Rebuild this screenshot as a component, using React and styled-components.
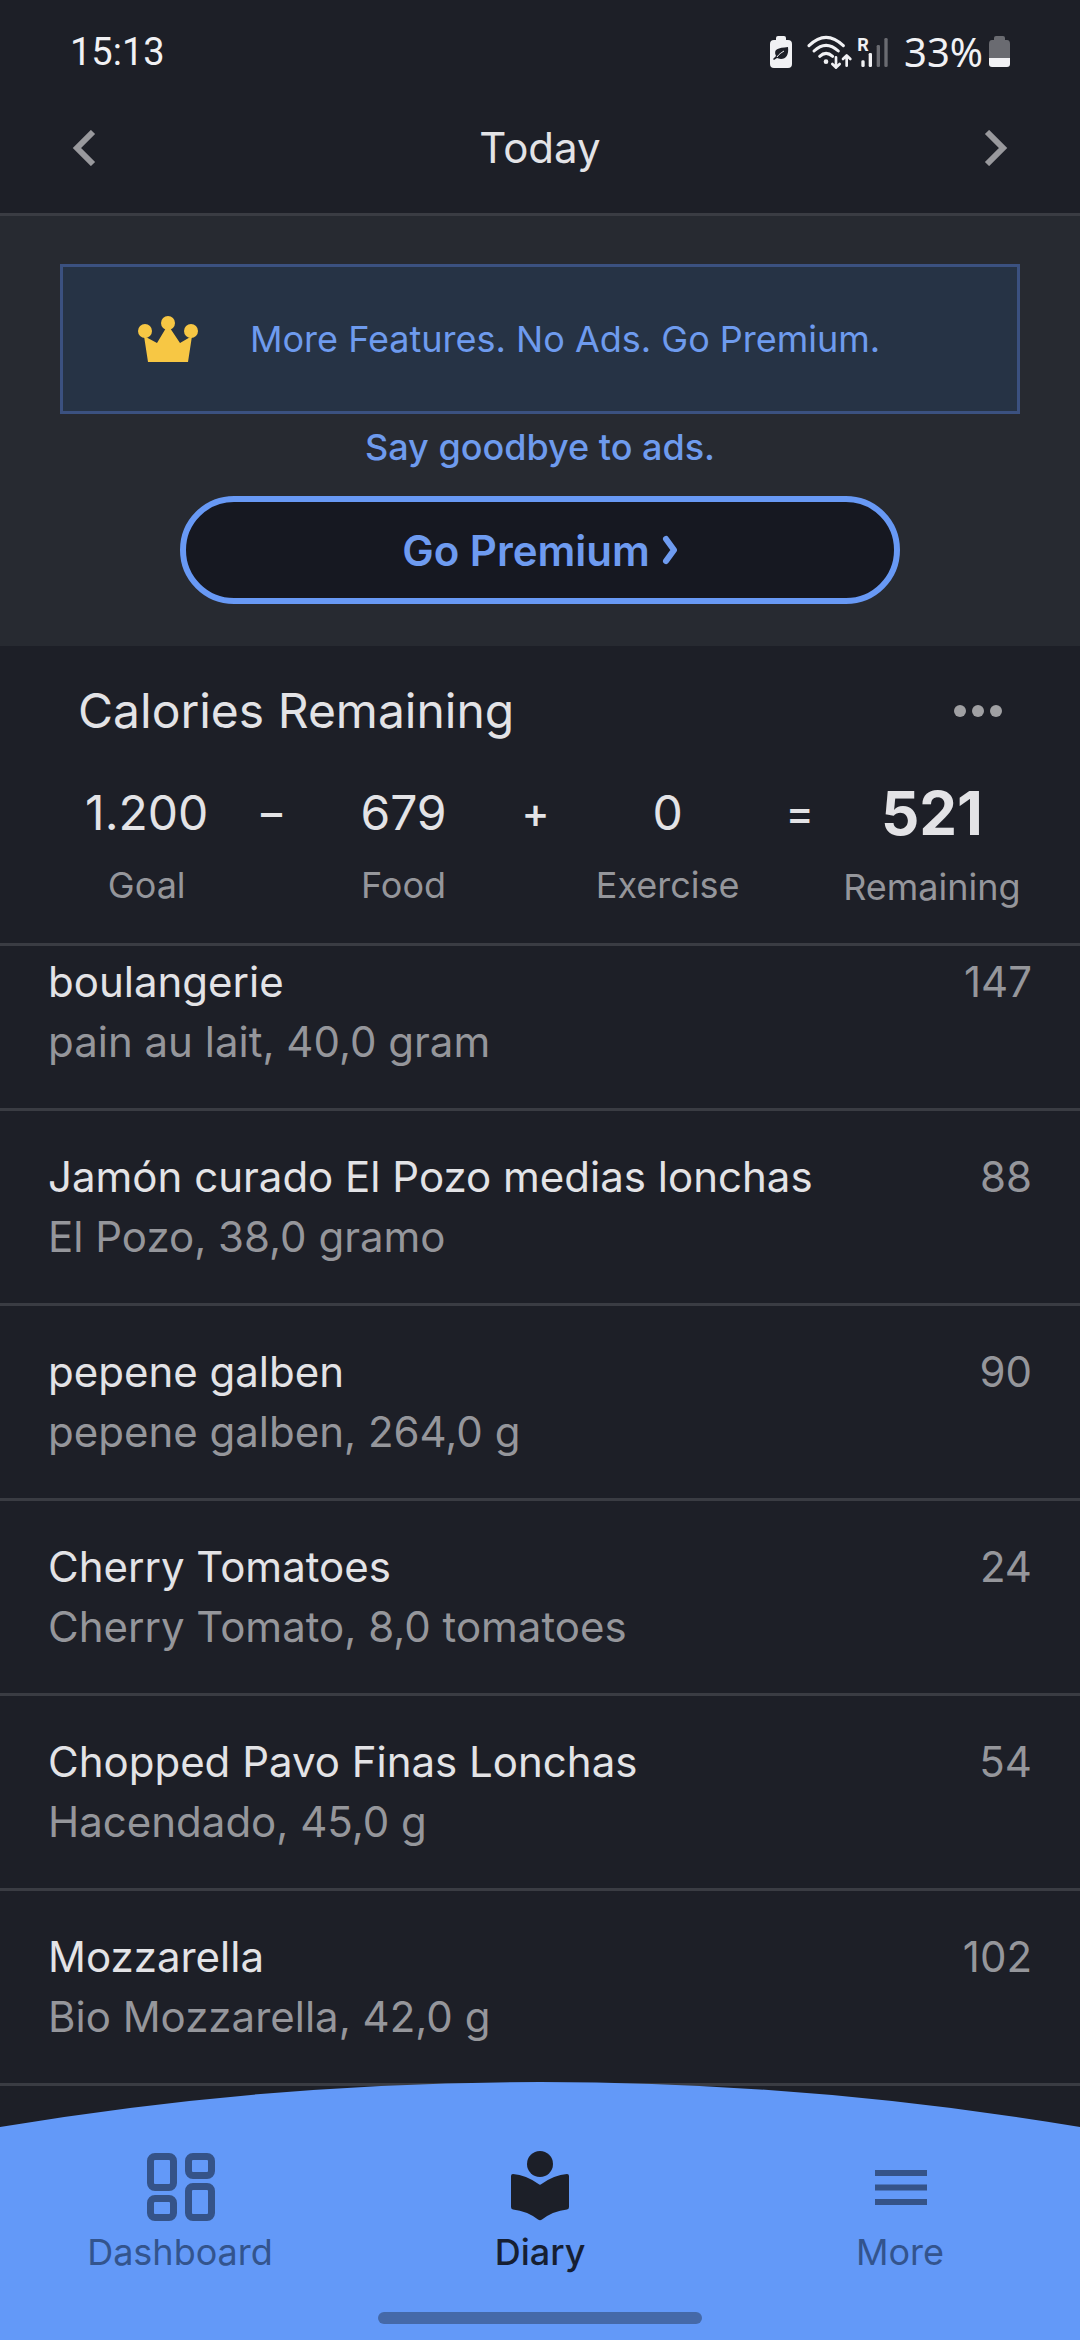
import { Fragment } from "react";
import styled, { createGlobalStyle } from "styled-components";

const foods = [
  { name: "boulangerie", detail: "pain au lait, 40,0 gram", calories: 147 },
  {
    name: "Jamón curado El Pozo medias lonchas",
    detail: "El Pozo, 38,0 gramo",
    calories: 88,
  },
  { name: "pepene galben", detail: "pepene galben, 264,0 g", calories: 90 },
  {
    name: "Cherry Tomatoes",
    detail: "Cherry Tomato, 8,0 tomatoes",
    calories: 24,
  },
  { name: "Chopped Pavo Finas Lonchas", detail: "Hacendado, 45,0 g", calories: 54 },
  { name: "Mozzarella", detail: "Bio Mozzarella, 42,0 g", calories: 102 },
];

const totals = [
  { value: "1.200", label: "Goal" },
  { operator: "–", value: "679", label: "Food" },
  { operator: "+", value: "0", label: "Exercise" },
  { operator: "=", value: "521", label: "Remaining", total: true },
];

const SaverIcon = () => (
  <svg width="22" height="32" viewBox="0 0 22 32" aria-hidden="true">
    <path
      d="M6 2Q6 0 8 0H14Q16 0 16 2V4H18Q22 4 22 8V28Q22 32 18 32H4Q0 32 0 28V8Q0 4 4 4H6Z"
      fill="#f1f1f4"
    />
    <path
      d="M18 11C19 19 16 23 11 23C9 23 8 22 7 22L4 24L3 23L6 20C3 13 8 12 18 11Z"
      fill="#1d1f27"
    />
    <path d="M7 21C9 18 11 17 14 15" stroke="#f1f1f4" fill="none" />
  </svg>
);

const NetworkIcon = () => (
  <svg width="82" height="35" viewBox="192 42 246 105" aria-hidden="true">
    <g fill="none" stroke="#f1f1f4" strokeWidth="9" strokeLinecap="round">
      <path d="M198 74Q249 24 301 74" />
      <path d="M213 90Q249 56 286 90" />
      <path d="M230 106Q249 88 269 106" />
      <g strokeWidth="8" strokeLinejoin="round">
        <path d="M279 109V140M268 129L279 140L290 129" />
        <path d="M311 134V104M300 114L311 103L322 114" />
      </g>
    </g>
    <circle cx="249" cy="122" r="7" fill="#f1f1f4" />
    <text x="343" y="90" fontSize="54" fontWeight="700" fontFamily="Roboto" fill="#f1f1f4">
      R
    </text>
    <rect x="355" y="118" width="10" height="20" rx="4" fill="#f1f1f4" />
    <rect x="377" y="96" width="10" height="42" rx="4" fill="#f1f1f4" />
    <rect x="401" y="72" width="10" height="66" rx="4" fill="#6a6b71" />
    <rect x="424" y="51" width="10" height="87" rx="4" fill="#6a6b71" />
  </svg>
);

const BatteryIcon = () => (
  <svg width="21" height="32" viewBox="0 0 21 32" aria-hidden="true">
    <path
      d="M5 2Q5 0 7 0H14Q16 0 16 2V4H18Q21 4 21 8V22H0V8Q0 4 3 4H5Z"
      fill="#6a6b71"
    />
    <path d="M0 22H21V28Q21 31 18 31H3Q0 31 0 28Z" fill="#f1f1f4" />
  </svg>
);

const CrownIcon = () => (
  <svg width="60" height="46" viewBox="0 0 60 46" fill="#f7c744" aria-hidden="true">
    <circle cx="7" cy="15" r="7" />
    <circle cx="30" cy="7" r="7" />
    <circle cx="53" cy="15" r="7" />
    <path d="M6 20L19 27L28 12H32L42 27L54 20L50 46H10Z" />
  </svg>
);

const DashboardIcon = () => (
  <svg
    width="72"
    height="72"
    viewBox="0 0 72 72"
    fill="none"
    stroke="#355388"
    strokeWidth="7"
    aria-hidden="true"
  >
    <rect x="6.5" y="5.5" width="23" height="31" rx="4.5" />
    <rect x="44.5" y="5.5" width="23" height="19" rx="4.5" />
    <rect x="6.5" y="47.5" width="23" height="19" rx="4.5" />
    <rect x="44.5" y="35.5" width="23" height="31" rx="4.5" />
  </svg>
);

const DiaryIcon = () => (
  <svg width="72" height="72" viewBox="0 0 72 72" fill="#1c1f28" aria-hidden="true">
    <circle cx="36" cy="13" r="13" />
    <path d="M7 25Q7 23 9 23Q22 24 34.5 33Q36 34.5 37.5 33Q50 24 63 23Q65 23 65 25V56Q65 58 63 58.5Q49 60 38 68.5Q36 70 34 68.5Q23 60 9 58.5Q7 58 7 56Z" />
  </svg>
);

const MoreIcon = () => (
  <svg width="72" height="72" viewBox="0 0 72 72" fill="#355388" aria-hidden="true">
    <rect x="11" y="19" width="52" height="6" />
    <rect x="11" y="33.5" width="52" height="6" />
    <rect x="11" y="48" width="52" height="6" />
  </svg>
);

const tabs = [
  { label: "Dashboard", Icon: DashboardIcon },
  { label: "Diary", Icon: DiaryIcon, active: true },
  { label: "More", Icon: MoreIcon },
];

const Chevron = ({ points, width, height, strokeWidth, round }) => (
  <svg
    width={width}
    height={height}
    viewBox={`0 0 ${width} ${height}`}
    fill="none"
    stroke="currentColor"
    strokeWidth={strokeWidth}
    strokeLinecap={round ? "round" : "butt"}
    strokeLinejoin={round ? "round" : "miter"}
    aria-hidden="true"
  >
    <polyline points={points} />
  </svg>
);

const App = () => {
  return (
    <Screen>
      <GlobalStyle />
      <StatusBar>
        <Clock>15:13</Clock>
        <StatusIcons>
          <SaverIcon />
          <NetworkIcon />
          <BatteryLevel>
            33%
            <BatteryIcon />
          </BatteryLevel>
        </StatusIcons>
      </StatusBar>
      <Header>
        <IconButton aria-label="Previous day">
          <Chevron points="21,2 5,18 21,34" width={24} height={36} strokeWidth={6} />
        </IconButton>
        <DateTitle>Today</DateTitle>
        <IconButton aria-label="Next day">
          <Chevron points="3,2 19,18 3,34" width={24} height={36} strokeWidth={6} />
        </IconButton>
      </Header>
      <Promo>
        <Banner href="#premium">
          <CrownIcon />
          More Features. No Ads. Go Premium.
        </Banner>
        <PromoText>Say goodbye to ads.</PromoText>
        <PremiumButton>
          Go Premium
          <Chevron points="4,4 12,15 4,26" width={16} height={30} strokeWidth={6} round />
        </PremiumButton>
      </Promo>
      <Summary>
        <SummaryHead>
          <SummaryTitle>Calories Remaining</SummaryTitle>
          <DotsButton aria-label="More options">
            <Dot />
            <Dot />
            <Dot />
          </DotsButton>
        </SummaryHead>
        <Equation>
          {totals.map(({ operator, value, label, total }) => (
            <Fragment key={label}>
              {operator && <Operator>{operator}</Operator>}
              <Term>
                <Value $total={total}>{value}</Value>
                <TermLabel>{label}</TermLabel>
              </Term>
            </Fragment>
          ))}
        </Equation>
      </Summary>
      <FoodList>
        {foods.map((food) => (
          <FoodRow key={food.name}>
            <div>
              <FoodName>{food.name}</FoodName>
              <FoodDetail>{food.detail}</FoodDetail>
            </div>
            <Calories>{food.calories}</Calories>
          </FoodRow>
        ))}
      </FoodList>
      <BottomNav>
        <Curve viewBox="0 0 1080 45" preserveAspectRatio="none" aria-hidden="true">
          <path d="M0 45Q540 -45 1080 45Z" fill="#6399f8" />
        </Curve>
        <NavBody>
          <Tabs>
            {tabs.map(({ label, Icon, active }) => (
              <Tab key={label} href={`#${label.toLowerCase()}`} $active={active}>
                <Icon />
                {label}
              </Tab>
            ))}
          </Tabs>
          <HomePill />
        </NavBody>
      </BottomNav>
    </Screen>
  );
};

const GlobalStyle = createGlobalStyle`
  * {
    box-sizing: border-box;
    margin: 0;
    padding: 0;
  }
  body {
    background: #1d1f27;
    font-family: Inter, Roboto, sans-serif;
  }
  svg {
    display: block;
    flex-shrink: 0;
  }
  button {
    font-family: inherit;
    border: none;
    background: none;
    cursor: pointer;
  }
  a {
    text-decoration: none;
  }
`;

const Screen = styled.div`
  display: flex;
  flex-direction: column;
  height: 100vh;
  color: #e3e3e6;
`;

const StatusBar = styled.div`
  display: flex;
  justify-content: space-between;
  align-items: center;
  height: 82px;
  padding: 22px 70px 0;
  color: #f1f1f4;
`;

const Clock = styled.time`
  font-family: Roboto, sans-serif;
  font-size: 38px;
`;

const StatusIcons = styled.div`
  display: flex;
  align-items: center;
  gap: 15px;
`;

const BatteryLevel = styled.span`
  display: flex;
  align-items: center;
  gap: 6px;
  font-family: "Noto Sans", sans-serif;
  font-size: 40px;
  line-height: 48px;
`;

const Header = styled.header`
  display: flex;
  justify-content: space-between;
  align-items: center;
  height: 134px;
  padding: 0 72px;
  border-bottom: 3px solid #3a3c43;
`;

const IconButton = styled.button`
  color: #99999d;
`;

const DateTitle = styled.h1`
  font-size: 42px;
  font-weight: 400;
`;

const Promo = styled.section`
  display: flex;
  flex-direction: column;
  align-items: center;
  padding: 48px 60px 42px;
  background: #272a31;
  color: #6e9bee;
  font-size: 36px;
`;

const Banner = styled.a`
  display: flex;
  align-items: center;
  gap: 52px;
  width: 100%;
  height: 150px;
  padding: 0 75px;
  border: 3px solid #3b5180;
  background: #263345;
  color: inherit;
`;

const PromoText = styled.p`
  font-weight: 500;
  line-height: 66px;
`;

const PremiumButton = styled.button`
  display: flex;
  justify-content: center;
  align-items: center;
  gap: 12px;
  width: 75%;
  height: 108px;
  margin-top: 16px;
  border: 6px solid #6899f5;
  border-radius: 54px;
  background: #161821;
  color: #6e9bf0;
  font-size: 42px;
  font-weight: 600;
`;

const Summary = styled.section`
  padding: 35px 52px 32px 58px;
  border-bottom: 3px solid #3a3c43;
`;

const SummaryHead = styled.div`
  display: flex;
  justify-content: space-between;
  align-items: center;
  padding: 0 26px 0 20px;
  margin-bottom: 34px;
`;

const SummaryTitle = styled.h2`
  font-size: 48px;
  font-weight: 400;
  line-height: 60px;
`;

const DotsButton = styled.button`
  display: flex;
  gap: 6px;
`;

const Dot = styled.span`
  width: 12px;
  height: 12px;
  border-radius: 50%;
  background: #a0a0a3;
`;

const Equation = styled.div`
  display: grid;
  grid-template-columns: 12fr repeat(3, 72px 13fr);
  align-items: center;
  text-align: center;
`;

const Term = styled.div`
  display: flex;
  flex-direction: column;
  gap: 12px;
`;

const Value = styled.span`
  font-size: ${(p) => (p.$total ? "60px" : "48px")};
  font-weight: ${(p) => (p.$total ? 700 : 400)};
  line-height: ${(p) => (p.$total ? "76px" : "72px")};
`;

const TermLabel = styled.span`
  font-size: 36px;
  line-height: 48px;
  color: #95969b;
`;

const Operator = styled.span`
  align-self: start;
  font-size: 42px;
  font-weight: 500;
  line-height: 76px;
`;

const FoodList = styled.ul`
  flex: 1;
  min-height: 0;
  overflow: hidden;
  list-style: none;
`;

const FoodRow = styled.li`
  display: flex;
  justify-content: space-between;
  padding: 36px 48px;
  border-bottom: 3px solid #3a3c43;
  font-size: 42px;
  line-height: 60px;

  &:first-child {
    padding-top: 6px;
  }
`;

const FoodName = styled.p`
  color: #e3e3e6;
`;

const FoodDetail = styled.p`
  color: #95969b;
`;

const Calories = styled.span`
  color: #95969b;
`;

const BottomNav = styled.nav`
  position: relative;
  margin-top: -45px;
`;

const Curve = styled.svg`
  width: 100%;
  height: 45px;
`;

const NavBody = styled.div`
  padding: 24px 0 16px;
  background: #6399f8;
`;

const Tabs = styled.div`
  display: grid;
  grid-template-columns: repeat(3, 1fr);
`;

const Tab = styled.a`
  display: flex;
  flex-direction: column;
  align-items: center;
  gap: 5px;
  font-size: 36px;
  font-weight: ${(p) => (p.$active ? 500 : 400)};
  line-height: 48px;
  color: ${(p) => (p.$active ? "#161f33" : "#33548d")};
`;

const HomePill = styled.div`
  width: 30%;
  height: 12px;
  margin: 36px auto 0;
  border-radius: 6px;
  background: #4569a8;
`;

export default App;
